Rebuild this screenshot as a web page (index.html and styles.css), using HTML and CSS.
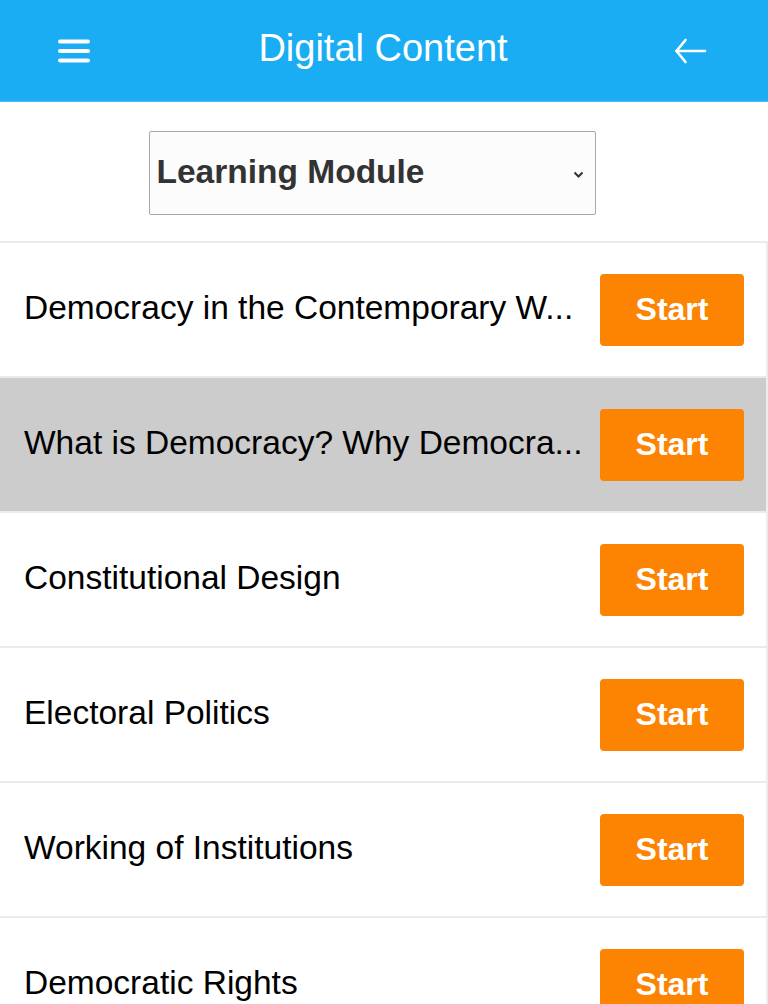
FILE: index.html
```html
<!DOCTYPE html>
<html lang="en">
<head>
<meta charset="utf-8">
<title>Digital Content</title>
<link rel="stylesheet" href="styles.css">
</head>
<body>
<header class="topbar">
  <button class="icon-btn menu" aria-label="Menu">
    <svg width="32" height="24" viewBox="0 0 32 24"><g stroke="#fff" stroke-width="4" stroke-linecap="round"><line x1="2" y1="2.5" x2="30" y2="2.5"/><line x1="2" y1="12" x2="30" y2="12"/><line x1="2" y1="21.5" x2="30" y2="21.5"/></g></svg>
  </button>
  <h1 class="title">Digital Content</h1>
  <button class="icon-btn back" aria-label="Back">
    <svg width="34" height="26" viewBox="0 0 34 26"><g stroke="#fff" stroke-width="2.6" stroke-linecap="round" stroke-linejoin="round" fill="none"><line x1="2.5" y1="13" x2="31" y2="13"/><polyline points="11.5,2 2.5,13 11.5,24"/></g></svg>
  </button>
</header>

<section class="filter">
  <div class="select-wrap">
    <select class="select">
      <option>Learning Module</option>
    </select>
    <svg class="chevron" width="11" height="7" viewBox="0 0 11 7"><polyline points="1.5,1.5 5.5,5.5 9.5,1.5" fill="none" stroke="#333" stroke-width="2"/></svg>
  </div>
</section>

<ul class="list">
  <li class="row"><span class="row-title">Democracy in the Contemporary W...</span><button class="start">Start</button></li>
  <li class="row active"><span class="row-title">What is Democracy? Why Democra...</span><button class="start">Start</button></li>
  <li class="row"><span class="row-title">Constitutional Design</span><button class="start">Start</button></li>
  <li class="row"><span class="row-title">Electoral Politics</span><button class="start">Start</button></li>
  <li class="row"><span class="row-title">Working of Institutions</span><button class="start">Start</button></li>
  <li class="row"><span class="row-title">Democratic Rights</span><button class="start">Start</button></li>
</ul>
</body>
</html>
```

FILE: styles.css
```css
* { box-sizing: border-box; }
html, body { margin: 0; padding: 0; }
body {
  font-family: "Liberation Sans", Arial, sans-serif;
  background: #fff;
  color: #000;
  overflow: hidden;
}
.topbar {
  height: 102px;
  background: #1aadf3;
  border-bottom: 1px solid #4fc0f6;
  display: flex;
  align-items: center;
  justify-content: space-between;
  padding: 0 60px 0 58px;
}
.icon-btn {
  background: none;
  border: 0;
  padding: 0;
  width: 34px;
  height: 30px;
  display: flex;
  align-items: center;
  justify-content: center;
}
.menu { justify-content: flex-start; }
.back { justify-content: flex-end; }
.title {
  margin: 0 0 4px 0;
  font-weight: normal;
  font-size: 38px;
  color: #fff;
}
.filter {
  height: 141px;
  border-bottom: 2px solid #ebebeb;
  display: flex;
  justify-content: center;
  padding-top: 29px;
}
.select-wrap {
  position: relative;
  width: 447px;
  height: 84px;
  margin-right: 24px;
}
.select {
  appearance: none;
  -webkit-appearance: none;
  width: 100%;
  height: 100%;
  border: 1.5px solid #a8a8a8;
  border-radius: 2px;
  background: #fcfcfc;
  font-family: "Liberation Sans", Arial, sans-serif;
  font-weight: bold;
  font-size: 33.5px;
  color: #333;
  padding: 0 0 4px 7px;
  margin: 0;
}
.chevron {
  position: absolute;
  right: 12px;
  top: 40px;
}
.list {
  list-style: none;
  margin: 0;
  padding: 0;
}
.row {
  height: 135px;
  border-bottom: 2px solid #ebebeb;
  border-right: 2px solid #ededed;
  display: flex;
  align-items: center;
  gap: 16px;
  padding: 0 22px 0 24px;
}
.row.active { background: #cccccc; }
.row-title {
  flex: 1;
  min-width: 0;
  white-space: nowrap;
  overflow: hidden;
  font-size: 33.5px;
  color: #000;
  padding-bottom: 3px;
}
.start {
  flex: none;
  width: 144px;
  height: 72px;
  background: #fd8402;
  border: 0;
  border-radius: 4px;
  color: #fff;
  font-family: "Liberation Sans", Arial, sans-serif;
  font-weight: bold;
  font-size: 32px;
  padding: 0;
}
```
